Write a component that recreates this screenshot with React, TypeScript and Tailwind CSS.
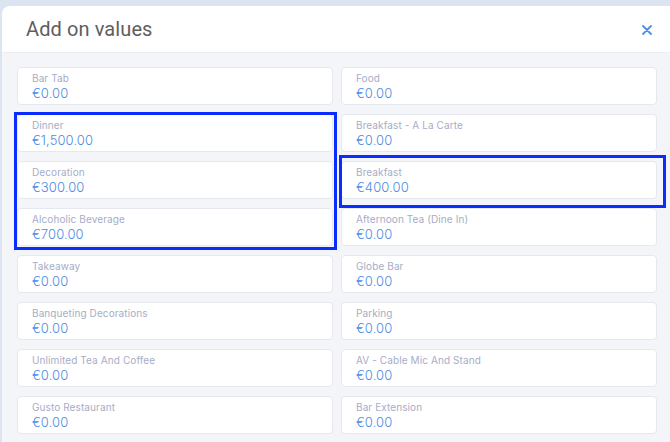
import * as React from 'react'

const items: { label: string; value: string }[] = [
  { label: 'Bar Tab', value: '€0.00' },
  { label: 'Food', value: '€0.00' },
  { label: 'Dinner', value: '€1,500.00' },
  { label: 'Breakfast - A La Carte', value: '€0.00' },
  { label: 'Decoration', value: '€300.00' },
  { label: 'Breakfast', value: '€400.00' },
  { label: 'Alcoholic Beverage', value: '€700.00' },
  { label: 'Afternoon Tea (Dine In)', value: '€0.00' },
  { label: 'Takeaway', value: '€0.00' },
  { label: 'Globe Bar', value: '€0.00' },
  { label: 'Banqueting Decorations', value: '€0.00' },
  { label: 'Parking', value: '€0.00' },
  { label: 'Unlimited Tea And Coffee', value: '€0.00' },
  { label: 'AV - Cable Mic And Stand', value: '€0.00' },
  { label: 'Gusto Restaurant', value: '€0.00' },
  { label: 'Bar Extension', value: '€0.00' }
]

function ValueCard({ label, value }: { label: string; value: string }) {
  return (
    <div className="h-[38px] bg-white border border-[#e6e8ef] rounded-[4px] pl-[14px] pt-[4px] flex flex-col">
      <span className="text-[10px] leading-[13px] text-[#a6adc6] tracking-[0.1px]">{label}</span>
      <span className="text-[13px] leading-[16px] text-[#4d8ae3] font-light tracking-[0.1px]">{value}</span>
    </div>
  )
}

export default function App() {
  return (
    <div className="relative w-[670px] h-[442px] overflow-hidden bg-[#dde4f1] pt-[6px] pl-[2px] font-['Inter',sans-serif]">
      <div className="h-full bg-white rounded-tl-[8px] overflow-hidden flex flex-col">
        {/* header */}
        <div className="h-[47px] shrink-0 flex items-center justify-between pl-[24px] pr-[18px] border-b border-[#eceef3]">
          <h1 className="text-[20px] text-[#5e5e5e] font-['Roboto',sans-serif] tracking-[0.1px]">Add on values</h1>
          <svg width="10" height="10" viewBox="0 0 10 10" className="mt-[2px]">
            <path d="M1 1L9 9M9 1L1 9" stroke="#4a8ef0" strokeWidth="1.8" strokeLinecap="round" />
          </svg>
        </div>

        {/* values */}
        <div className="flex-1 bg-[#f4f5f9] pl-[15px] pr-[13px] pt-[14px]">
          <div className="grid grid-cols-2 gap-x-[8px] gap-y-[9px]">
            {items.map((it) => (
              <ValueCard key={it.label} label={it.label} value={it.value} />
            ))}
          </div>
        </div>
      </div>

      {/* highlight boxes */}
      <div className="absolute left-[14px] top-[112px] w-[323px] h-[138px] border-[3px] border-[#0a2cff]" />
      <div className="absolute left-[339px] top-[155px] w-[327px] h-[53px] border-[3px] border-[#0a2cff]" />
    </div>
  )
}
